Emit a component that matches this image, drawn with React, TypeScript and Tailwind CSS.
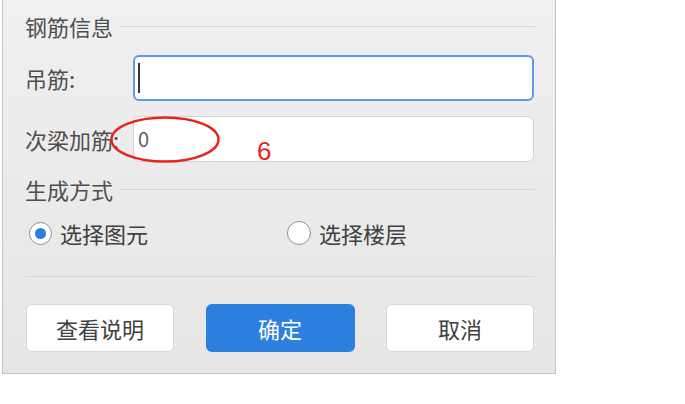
export default function App() {
  const font = { fontFamily: '"Noto Sans CJK SC", "Noto Sans", sans-serif' };
  return (
    <div className="relative h-[404px] w-[685px] overflow-hidden bg-white" style={font}>
      <div className="ml-[2px] h-[374px] w-[554px] border-b border-l border-r border-[#c4c4c4] bg-gradient-to-b from-[#f0f0f0] to-[#e6e6e6] pl-[22px] pr-[20px] pt-[12px] text-[#4f4f4f]">
        {/* 钢筋信息 */}
        <div className="flex h-7 items-center gap-[7px]">
          <span className="text-[22px] leading-none">钢筋信息</span>
          <div className="h-px flex-1 bg-[#d6d6d6]" />
        </div>

        <div className="mt-[15px] flex items-center">
          <span className="w-[108px] text-[22px] leading-none">吊筋:</span>
          <div className="flex h-[46px] w-[401px] items-center rounded-[6px] border-2 border-[#5b9be6] bg-white px-[3px]">
            <span className="h-[30px] w-[2px] bg-[#333333]" />
          </div>
        </div>

        <div className="mt-[15px] flex items-center">
          <span className="w-[108px] whitespace-nowrap text-[22px] leading-none">次梁加筋:</span>
          <div className="flex h-[46px] w-[401px] items-center rounded-[6px] border border-[#d2d2d2] bg-white px-[4px]">
            <span className="text-[20px] text-[#5a5f6a]">0</span>
          </div>
        </div>

        {/* 生成方式 */}
        <div className="mt-[13px] flex h-7 items-center gap-[7px]">
          <span className="text-[22px] leading-none">生成方式</span>
          <div className="h-px flex-1 bg-[#d6d6d6]" />
        </div>

        <div className="mt-[17px] flex h-[26px] items-center">
          <div className="flex w-[262px] items-center gap-[8px] pl-[4px]">
            <span className="flex h-[23px] w-[23px] items-center justify-center rounded-full border-[1.5px] border-[#8f8f8f] bg-white">
              <span className="h-[11px] w-[11px] rounded-full bg-[#2c7de0]" />
            </span>
            <span className="text-[22px] leading-none text-[#404040]">选择图元</span>
          </div>
          <div className="flex items-center gap-[8px]">
            <span className="h-[24px] w-[24px] rounded-full border-[1.5px] border-[#8f8f8f] bg-white" />
            <span className="text-[22px] leading-none text-[#404040]">选择楼层</span>
          </div>
        </div>

        <div className="mt-[30px] h-px w-[510px] bg-[#d6d6d6]" />

        <div className="mt-[27px] flex w-[509px] justify-between pl-[1px]">
          <button className="h-[48px] w-[148px] rounded-[6px] border border-[#d8d8d8] bg-white text-[22px] text-[#404040]">
            查看说明
          </button>
          <button className="h-[48px] w-[149px] rounded-[6px] bg-[#2d7fe0] text-[22px] text-white">
            确定
          </button>
          <button className="h-[48px] w-[148px] rounded-[6px] border border-[#d8d8d8] bg-white text-[22px] text-[#404040]">
            取消
          </button>
        </div>
      </div>

      {/* annotation */}
      <svg className="absolute left-[109px] top-[115px]" width="112" height="49" viewBox="0 0 112 49">
        <ellipse cx="56" cy="24.5" rx="53.5" ry="22" fill="none" stroke="#e8231b" strokeWidth="2.5" />
      </svg>
      <span
        className="absolute left-[257px] top-[138px] text-[26px] leading-none text-[#e8231b]"
        style={{ fontFamily: '"Liberation Sans", sans-serif' }}
      >
        6
      </span>
    </div>
  );
}
